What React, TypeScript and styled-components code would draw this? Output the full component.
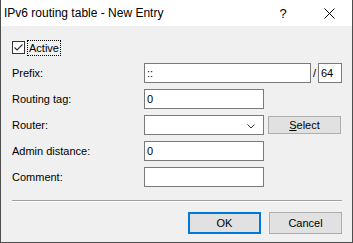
import React from "react";
import styled, { createGlobalStyle } from "styled-components";

const Global = createGlobalStyle`
  html, body { margin: 0; padding: 0; background: #ffffff; }
  * { box-sizing: border-box; }
`;

const Window = styled.div`
  width: 353px;
  height: 243px;
  background: #f0f0f0;
  border: 1px solid #4d4d4d;
  border-top: none;
  display: flex;
  flex-direction: column;
  font-family: "Liberation Sans", Arial, sans-serif;
  font-size: 11px;
  color: #000;
`;

const TitleBar = styled.div`
  height: 26px;
  flex: none;
  background: #fff;
  display: flex;
  align-items: center;
  padding-left: 3px;
  font-family: "Liberation Sans", Arial, sans-serif;
  font-size: 12px;
  color: #000;
`;

const Title = styled.div`
  flex: 1;
  padding-bottom: 1px;
`;

const TitleButton = styled.div<{ $w: number }>`
  width: ${(p) => p.$w}px;
  height: 26px;
  display: flex;
  align-items: center;
  justify-content: center;
`;

const Body = styled.div`
  flex: 1;
  display: flex;
  flex-direction: column;
  padding: 13px 10px 0 11px;
`;

const CheckRow = styled.label`
  display: flex;
  align-items: center;
  height: 17px;
`;

const CheckBox = styled.span`
  width: 13px;
  height: 13px;
  border: 1px solid #333;
  background: #fff;
  display: flex;
  align-items: center;
  justify-content: center;
`;

const Focus = styled.span`
  margin-left: 3px;
  height: 14px;
  padding: 0 1px;
  display: flex;
  align-items: center;
  outline: 1px dotted #000;
  line-height: 14px;
`;

const Form = styled.div`
  margin-top: 7px;
  display: grid;
  grid-template-columns: 132px 1fr;
  grid-auto-rows: 20px;
  row-gap: 6px;
  align-items: center;
`;

const Label = styled.div`
  line-height: 20px;
`;

const Fields = styled.div`
  display: flex;
  align-items: center;
  height: 20px;
`;

const Input = styled.div<{ $w: number }>`
  width: ${(p) => p.$w}px;
  height: 20px;
  border: 1px solid #7a7a7a;
  background: #fff;
  padding-left: 2px;
  line-height: 18px;
  position: relative;
  flex: none;
`;

const Slash = styled.div`
  width: 7px;
  text-align: center;
  color: #000;
`;

const Chevron = styled.svg`
  position: absolute;
  right: 8px;
  top: 8px;
`;

const Button = styled.div<{ $primary?: boolean; $h: number }>`
  width: 73px;
  height: ${(p) => p.$h}px;
  background: #e1e1e1;
  border: ${(p) => (p.$primary ? "2px solid #0078d7" : "1px solid #adadad")};
  display: flex;
  align-items: center;
  justify-content: center;
  flex: none;
`;

const Separator = styled.div`
  margin-top: 13px;
  height: 2px;
  border-top: 1px solid #a0a0a0;
  border-bottom: 1px solid #ffffff;
`;

const ButtonRow = styled.div`
  margin-top: 10px;
  display: flex;
  justify-content: flex-end;
  gap: 8px;
`;

const U = styled.span`
  text-decoration: underline;
`;

export default function App() {
  return (
    <>
      <Global />
      <Window>
        <TitleBar>
          <Title>IPv6 routing table - New Entry</Title>
          <TitleButton $w={46}>
            <span style={{ fontSize: 13 }}>?</span>
          </TitleButton>
          <TitleButton $w={46}>
            <svg width="11" height="11" viewBox="0 0 11 11">
              <path d="M0.5 0.5 L10.5 10.5 M10.5 0.5 L0.5 10.5" stroke="#000" strokeWidth="1" fill="none" />
            </svg>
          </TitleButton>
        </TitleBar>
        <Body>
          <CheckRow>
            <CheckBox>
              <svg width="11" height="11" viewBox="0 0 11 11">
                <path d="M1.5 5.5 L4 8 L9.5 2.5" stroke="#333" strokeWidth="1.2" fill="none" />
              </svg>
            </CheckBox>
            <Focus>Active</Focus>
          </CheckRow>
          <Form>
            <Label>Prefix:</Label>
            <Fields>
              <Input $w={167}>::</Input>
              <Slash>/</Slash>
              <Input $w={24}>64</Input>
            </Fields>
            <Label>Routing tag:</Label>
            <Fields>
              <Input $w={120}>0</Input>
            </Fields>
            <Label>Router:</Label>
            <Fields>
              <Input $w={120}>
                <Chevron width="8" height="5" viewBox="0 0 8 5">
                  <path d="M0.5 0.5 L4 4 L7.5 0.5" stroke="#333" strokeWidth="1" fill="none" />
                </Chevron>
              </Input>
              <span style={{ width: 4 }} />
              <Button $h={18}>
                <span>
                  <U>S</U>elect
                </span>
              </Button>
            </Fields>
            <Label>Admin distance:</Label>
            <Fields>
              <Input $w={120}>0</Input>
            </Fields>
            <Label>Comment:</Label>
            <Fields>
              <Input $w={120}></Input>
            </Fields>
          </Form>
          <Separator />
          <ButtonRow>
            <Button $primary $h={22}>OK</Button>
            <Button $h={22}>Cancel</Button>
          </ButtonRow>
        </Body>
      </Window>
    </>
  );
}
